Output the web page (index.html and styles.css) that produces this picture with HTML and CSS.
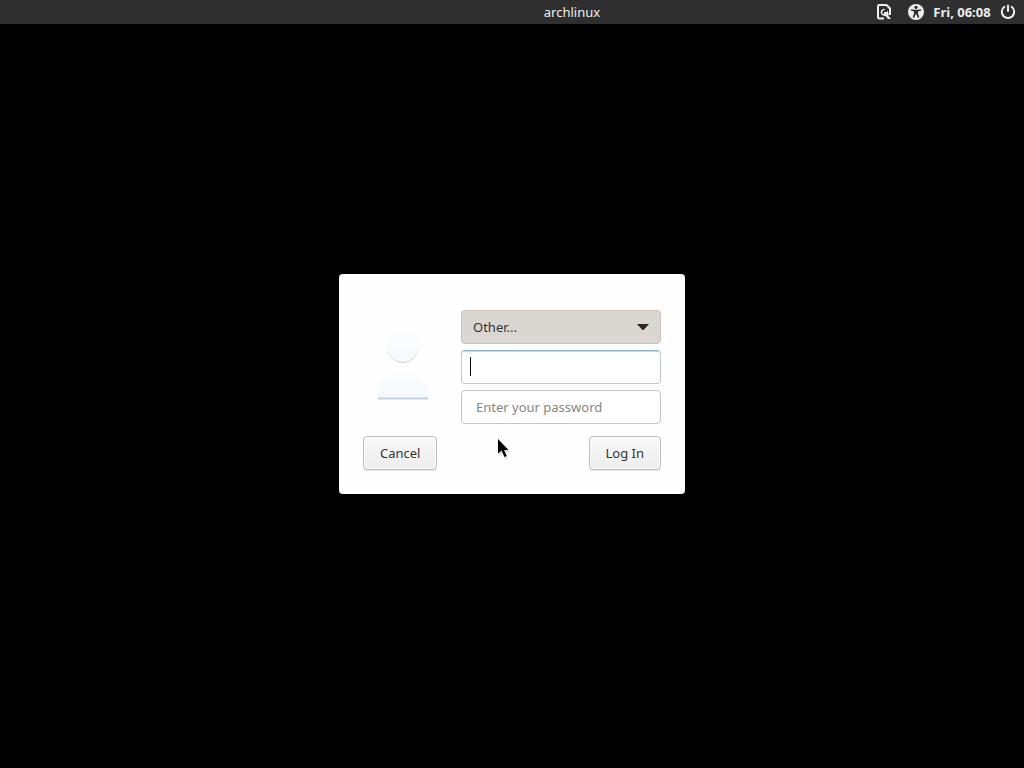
FILE: index.html
```html
<!DOCTYPE html>
<html lang="en">
<head>
<meta charset="utf-8">
<meta name="viewport" content="width=device-width, initial-scale=1">
<title>archlinux</title>
<link rel="stylesheet" href="styles.css">
</head>
<body>
<header class="panel">
  <span class="hostname">archlinux</span>
  <div class="indicators">
    <button class="indicator session" type="button" aria-label="Session">
      <svg width="16" height="16" viewBox="0 0 16 16" fill="none" stroke="currentColor" stroke-width="2">
        <path d="M8 14.500H3.200Q2 14.500 2 13.300V2.200Q2 1 3.200 1H10.500L14 4.500V11"/>
        <path d="M8.500 5.200Q5 6 5.500 9Q6.200 11 8.500 11" stroke-width="1.500"/>
        <path d="M8 8H11V6L12.500 9V12L15 15H12L9.500 12L8 12Z" fill="currentColor" stroke="none"/>
      </svg>
    </button>
    <button class="indicator" type="button" aria-label="Accessibility">
      <svg width="16" height="16" viewBox="0 0 16 16">
        <circle cx="8" cy="8" r="8" fill="currentColor"/>
        <circle class="cut" cx="8" cy="3.300" r="1.600"/>
        <path class="cut" d="M2.800 5.200L6.500 5.700H9.500L13.200 5.200V6.600L10 7.400V9.400L11.300 13.300L9.900 13.900L8.300 10.300H7.700L6.100 13.900L4.700 13.300L6 9.400V7.400L2.800 6.600Z"/>
      </svg>
    </button>
    <time class="clock">Fri, 06:08</time>
    <button class="indicator" type="button" aria-label="Power">
      <svg width="16" height="16" viewBox="0 0 16 16" fill="none" stroke="currentColor" stroke-width="2" stroke-linecap="round">
        <path d="M4.400 2.800A6.200 6.200 0 1 0 11.600 2.800"/>
        <path d="M8 1.500V7"/>
      </svg>
    </button>
  </div>
</header>
<main class="desktop">
  <form class="login">
    <div class="content">
      <svg class="avatar" width="64" height="80" viewBox="0 0 64 80" aria-hidden="true">
        <defs>
          <linearGradient id="skin" x1="0" y1="0" x2="0" y2="1">
            <stop offset="0" stop-color="#fcfdfe"/>
            <stop offset="1" stop-color="#f6fafc"/>
          </linearGradient>
          <linearGradient id="rim" x1="0" y1="0" x2="0" y2="1">
            <stop offset="0.500" stop-color="#f9fbfc"/>
            <stop offset="1" stop-color="#c9d0d4"/>
          </linearGradient>
          <linearGradient id="body" x1="0" y1="0" x2="0" y2="1">
            <stop offset="0" stop-color="#fbfdfe"/>
            <stop offset="1" stop-color="#f4f8fd"/>
          </linearGradient>
        </defs>
        <path d="M6 72Q5 56 15 51Q20 48 26 44H38Q44 48 49 51Q59 56 58 72Z" fill="url(#body)"/>
        <circle cx="32" cy="20" r="15.500" fill="url(#skin)" stroke="url(#rim)"/>
        <path d="M7 71.500H57" stroke="#c3d0e2" stroke-width="2"/>
      </svg>
      <div class="fields">
        <div class="user">
          <select class="field user-list" aria-label="User"><option>Other...</option></select>
          <svg class="arrow" width="12" height="6" viewBox="0 0 12 6" aria-hidden="true"><path d="M0 0H12L7 5.500Q6 6.500 5 5.500Z" fill="#30241e"/></svg>
        </div>
        <div class="username">
          <input class="field entry active" type="text" aria-label="Username">
        </div>
        <input class="field entry" type="password" placeholder="Enter your password" aria-label="Password">
      </div>
    </div>
    <div class="actions">
      <button class="action" type="button">Cancel</button>
      <button class="action" type="submit">Log In</button>
    </div>
    <svg class="pointer" width="14" height="22" viewBox="0 0 14 22" aria-hidden="true">
      <path d="M1 2V17L4.500 14L7.500 20.500L10 19.500L7.200 13.500H12Z" fill="#bbb" opacity="0.500"/>
      <path d="M0 0V14.500L3.500 11.500L6.500 18L8.700 17L6 11H10.500Z" fill="#000"/>
    </svg>
  </form>
</main>
</body>
</html>
```

FILE: styles.css
```css
* {
  box-sizing: border-box;
}

body {
  margin: 0;
  min-height: 100vh;
  display: flex;
  flex-direction: column;
  background: #000;
  color: #333;
  font: 13px/20px "Noto Sans", sans-serif;
}

button,
input,
select {
  margin: 0;
  font: inherit;
  color: inherit;
}

.panel {
  display: grid;
  grid-template-columns: 1fr auto 1fr;
  align-items: center;
  height: 24px;
  padding: 0 8px 0 128px;
  background: #2f2f2f;
  color: #eee;
}

.hostname {
  grid-column: 2;
}

.indicators {
  display: flex;
  justify-content: flex-end;
  align-items: center;
  gap: 8px;
}

.indicator {
  display: flex;
  padding: 0;
  border: 0;
  background: none;
}

.session {
  margin-right: 8px;
}

.cut {
  fill: #2f2f2f;
}

.clock {
  min-width: 60px;
  text-align: center;
  font-weight: 700;
}

.desktop {
  flex: 1;
  display: flex;
  justify-content: center;
  align-items: center;
  padding-bottom: 24px;
}

.login {
  position: relative;
  display: flex;
  flex-direction: column;
  gap: 12px;
  padding: 36px 24px 24px;
  border-radius: 4px;
  background: #fefefe;
}

.content {
  display: flex;
  justify-content: space-between;
  gap: 26px;
  padding-left: 8px;
}

.avatar {
  align-self: center;
}

.fields {
  display: flex;
  flex-direction: column;
  gap: 6px;
  width: 200px;
}

.user,
.username {
  position: relative;
  display: flex;
}

.field {
  width: 100%;
  height: 34px;
  border: 1px solid #c4c4c4;
  border-radius: 4px;
  outline: 0;
}

.user-list {
  appearance: none;
  padding: 0 32px 0 11px;
  border-color: #c9c1ba;
  background: #dad6d2;
}

.arrow {
  position: absolute;
  right: 12px;
  top: 14px;
  pointer-events: none;
}

.entry {
  padding: 0 14px;
  background: #fff;
}

.entry::placeholder {
  color: #858585;
  opacity: 1;
}

.active {
  border-color: #8fb4c4 #c0c8cc #c4c4c4;
  box-shadow: inset 0 1px 0 #c2dbe6;
}

.username::before {
  content: "";
  position: absolute;
  left: 9px;
  top: 7px;
  width: 1px;
  height: 19px;
  background: #111;
}

.actions {
  display: flex;
  justify-content: space-between;
}

.action {
  height: 34px;
  padding: 0 16px;
  border: 1px solid #bdbdbd;
  border-radius: 4px;
  background: linear-gradient(#f8f8f8, #ededed);
  box-shadow: inset 0 0 0 1px #fafafa, 0 1px 1px #e4e4e4;
}

.pointer {
  position: absolute;
  left: 159px;
  top: 165px;
}
```
